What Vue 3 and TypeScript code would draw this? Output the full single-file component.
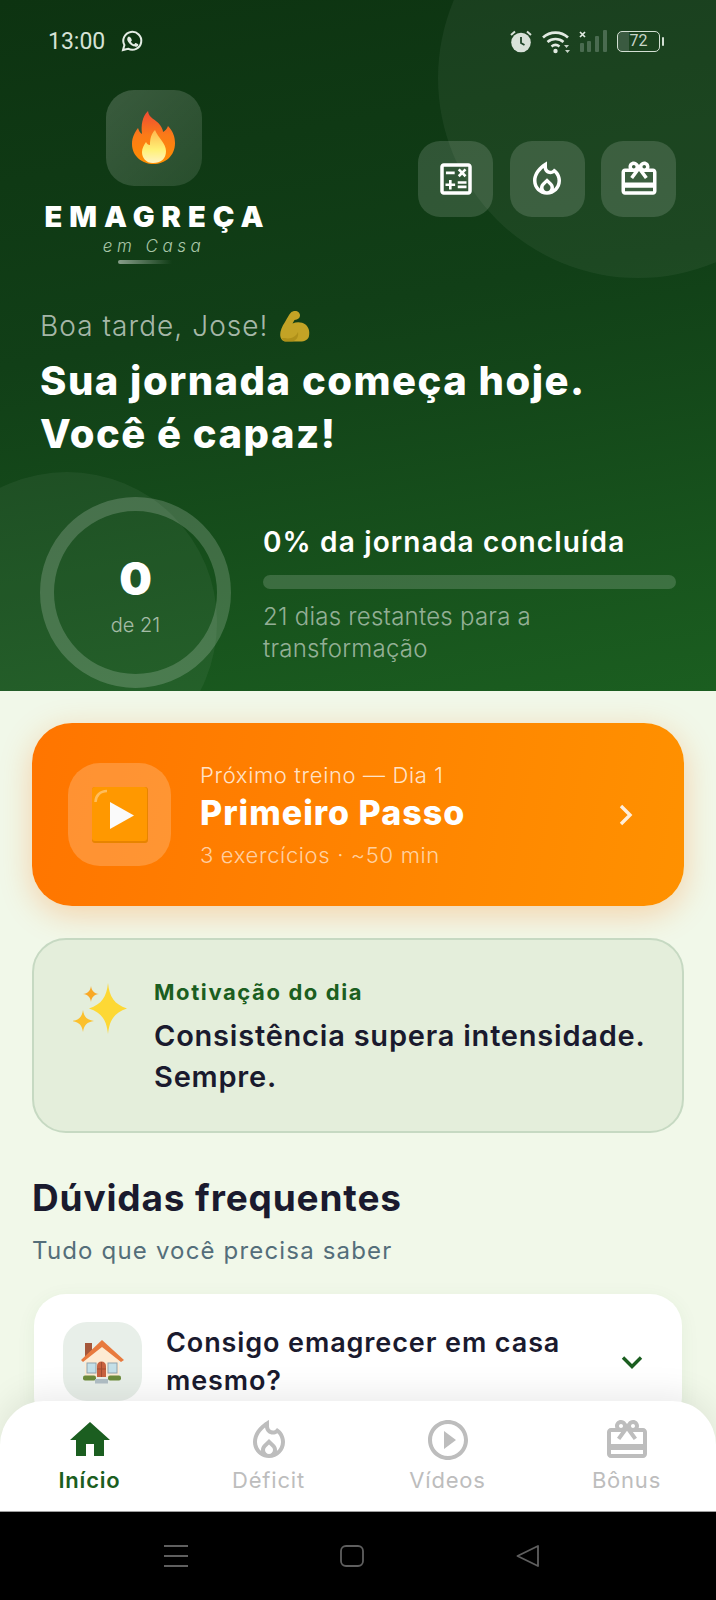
<script setup lang="ts">
interface NavItem {
  label: string;
  d: string;
  active?: boolean;
}

const icons = {
  calc: 'M19 3H5c-1.1 0-2 .9-2 2v14c0 1.1.9 2 2 2h14c1.1 0 2-.9 2-2V5c0-1.1-.9-2-2-2zm0 16H5V5h14v14zM6.25 7.72h5v1.5h-5zM13 15.75h5v1.5h-5zM13 13.25h5v1.5h-5zM8 18h1.5v-2h2v-1.5h-2v-2H8v2H6V16h2zM14.09 10.95l1.41-1.41 1.41 1.41 1.06-1.06-1.41-1.42 1.41-1.41L16.91 6 15.5 7.41 14.09 6l-1.06 1.06 1.41 1.41-1.41 1.42z',
  fire: 'M16 6l-.44.55c-.42.52-.98.75-1.54.75C13 7.3 12 6.52 12 5.3V2S4 6 4 13c0 4.42 3.58 8 8 8s8-3.58 8-8c0-2.96-1.61-5.62-4-7zm-4 13c-1.1 0-2-.9-2-2 0-.55.22-1.05.59-1.41L12 14.2l1.42 1.39c.36.36.58.86.58 1.41 0 1.1-.9 2-2 2zm3.96-1.5c.04-.36.22-1.89-1.13-3.22L12 11.5l-2.83 2.78C7.81 15.62 8 17.17 8.04 17.5 6.79 16.4 6 14.79 6 13c0-3.16 2.13-5.65 4.03-7.25.23 1.99 1.93 3.55 3.99 3.55.78 0 1.54-.23 2.18-.66C17.34 9.78 18 11.35 18 13c0 1.79-.79 3.4-2.04 4.5z',
  gift: 'M20 6h-2.18c.11-.31.18-.65.18-1 0-1.66-1.34-3-3-3-1.05 0-1.96.54-2.5 1.35l-.5.67-.5-.68C10.96 2.54 10.05 2 9 2 7.34 2 6 3.34 6 5c0 .35.07.69.18 1H4c-1.11 0-1.99.89-1.99 2L2 19c0 1.11.89 2 2 2h16c1.11 0 2-.89 2-2V8c0-1.11-.89-2-2-2zm-5-2c.55 0 1 .45 1 1s-.45 1-1 1-1-.45-1-1 .45-1 1-1zM9 4c.55 0 1 .45 1 1s-.45 1-1 1-1-.45-1-1 .45-1 1-1zm11 15H4v-2h16v2zm0-5H4V8h5.08L7 10.83 8.62 12 12 7.4l3.38 4.6L17 10.83 14.92 8H20v6z',
  home: 'M10 20v-6h4v6h5v-8h3L12 3 2 12h3v8z',
  play: 'M12 2C6.48 2 2 6.48 2 12s4.48 10 10 10 10-4.48 10-10S17.52 2 12 2zm0 18c-4.41 0-8-3.59-8-8s3.59-8 8-8 8 3.59 8 8-3.59 8-8 8zm-2-3.5 6-4.5-6-4.5v9z',
};

const actions: string[] = [icons.calc, icons.fire, icons.gift];

const nav: NavItem[] = [
  { label: 'Início', d: icons.home, active: true },
  { label: 'Déficit', d: icons.fire },
  { label: 'Vídeos', d: icons.play },
  { label: 'Bônus', d: icons.gift },
];
</script>

<template>
  <div class="screen">
    <header class="hero">
      <div class="blob blob-top"></div>
      <div class="blob blob-bottom"></div>

      <div class="status">
        <div class="status-left">
          <span class="clock">13:00</span>
          <svg class="wa" viewBox="0 0 24 24" fill="none" stroke="currentColor">
            <path stroke-width="2" d="M3 21l1.4-4.9A9 9 0 1 1 8 19.7L3 21z" />
            <path fill="currentColor" stroke="none" d="M9.2 7.4c-.3 0-.7.1-1 .5-.4.4-1 1-1 2.3s1 2.6 1.100 2.800c.1.200 1.900 3 4.700 4.100 2.300.9 2.800.7 3.300.7s1.600-.7 1.800-1.300c.2-.6.2-1.200.2-1.300-.1-.1-.3-.2-.5-.3l-1.900-.9c-.3-.1-.4-.1-.6.1l-.8 1c-.2.2-.3.2-.6.100-1.100-.5-2-1-2.800-2.300-.2-.3 0-.5.1-.6l.6-.9c.1-.2.1-.3 0-.5l-.9-2.100c-.2-.5-.5-.4-.7-.4z" />
          </svg>
        </div>
        <div class="status-right">
          <svg class="st-alarm" viewBox="0 0 22 24">
            <circle cx="11" cy="13.500" r="9.800" fill="#d9e2da" />
            <path d="M11 8v6l3.500 2" stroke="#20452a" stroke-width="1.800" fill="none" />
            <path d="M1 6 5 2.500M21 6 17 2.500" stroke="#d9e2da" stroke-width="2" />
          </svg>
          <svg class="st-wifi" viewBox="0 0 29 25" fill="none" stroke="#e2eae2" stroke-width="2.600">
            <path d="M1 8.500C8 2 19 2 26 8.500" />
            <path d="M5.500 13c4.500-4 11.500-4 16 0" />
            <path d="M9.500 17.500c2.500-2 5.500-2 8 0" />
            <circle cx="13.500" cy="22" r="2.200" fill="#e2eae2" stroke="none" />
            <path d="M22 16h5l-2.500 3z M23 21h5l-2.500 3z" fill="#c5d2c6" stroke="none" />
          </svg>
          <svg class="st-signal" viewBox="0 0 28 22">
            <path d="M1 2l5 5M6 2 1 7" stroke="#e2eae2" stroke-width="1.700" />
            <rect x="1" y="13" width="4" height="9" rx="1" fill="#4a6b50" />
            <rect x="8" y="11" width="4" height="11" rx="1" fill="#4a6b50" />
            <rect x="16" y="6" width="4" height="16" rx="1" fill="#4a6b50" />
            <rect x="24" y="0" width="4" height="22" rx="1" fill="#4a6b50" />
          </svg>
          <div class="battery">
            <div class="battery-body"><span>72</span></div>
            <div class="battery-tip"></div>
          </div>
        </div>
      </div>

      <div class="top-row">
        <div class="brand">
          <div class="logo-tile">
            <svg class="flame" viewBox="0 0 44 54">
              <defs>
                <linearGradient id="fo" x1="0" y1="0" x2="0" y2="1">
                  <stop offset="0" stop-color="#ef4a34" />
                  <stop offset="0.45" stop-color="#fb7a18" />
                  <stop offset="1" stop-color="#ff8f00" />
                </linearGradient>
                <linearGradient id="fi" x1="0" y1="0" x2="0" y2="1">
                  <stop offset="0" stop-color="#ffb74d" />
                  <stop offset="0.6" stop-color="#fff176" />
                  <stop offset="1" stop-color="#fff3c4" />
                </linearGradient>
              </defs>
              <path fill="url(#fo)" d="M16 0C17 8 24 8 28 14C30 17 31 19 31 21C33 20 35 18 36 15C41 20 43 26 43 32C43 45 33 53 21.500 53C10 53 0 45 0 33C0 26 3 21 6 17C7 20 8 22 10 23C9 14 10 6 16 0Z" />
              <path fill="url(#fi)" d="M23 19C26 27 34 32 34 40C34 48 29 52 21 52C14 52 10 47 10 41C10 37 12 34 14 31C15 33 16 34 18 34C18 28 19 23 23 19Z" />
            </svg>
          </div>
          <div class="brand-name">EMAGREÇA</div>
          <div class="brand-sub">em Casa</div>
          <div class="brand-line"></div>
        </div>
        <div class="actions">
          <button v-for="(d, i) in actions" :key="i" class="action" type="button">
            <svg viewBox="0 0 24 24" fill="#fff"><path :d="d" /></svg>
          </button>
        </div>
      </div>

      <p class="greet">
        <span>Boa tarde, Jose!</span>
        <svg class="muscle" viewBox="0 0 30 31">
          <path fill="#f5bf2a" d="M15 0C18 0 20 2 20 4.500C20 7 18 8.500 14.500 9L12.500 12.500C17 10.500 22 11 25.500 13.500C28.500 16 30 20 29 25C28.500 28.500 25 30.500 20 30.500H6C2.500 30.500 .5 28 .2 24C0 20 2 15.500 5 11C7 7.500 9 3.500 11 1.500C12 .5 13.500 0 15 0Z" />
          <path fill="#d09c14" d="M5 27C10 28.500 16 26 18 21C19 26 16 30 12 30.500H6C4 30.500 2.500 29 1.800 27Z" opacity="0.7" />
        </svg>
      </p>
      <h1 class="headline">Sua jornada começa hoje.<br />Você é capaz!</h1>

      <div class="progress">
        <div class="ring">
          <span class="ring-num">0</span>
          <span class="ring-of">de 21</span>
        </div>
        <div class="progress-info">
          <div class="progress-title">0% da jornada concluída</div>
          <div class="bar"></div>
          <div class="progress-note">21 dias restantes para a transformação</div>
        </div>
      </div>
    </header>

    <main class="content">
      <section class="next">
        <div class="next-tile">
          <svg class="play-emoji" viewBox="0 0 56 56">
            <rect width="56" height="56" rx="3" fill="#e88400" />
            <rect width="55" height="54" rx="3" fill="#ff9800" />
            <path d="M3.500 15C3.500 9 8 4 15 4" stroke="#ffbd5c" stroke-width="2.500" fill="none" />
            <path d="M18 15l24 13.500-24 13.500z" fill="#fafafa" />
          </svg>
        </div>
        <div class="next-text">
          <div class="next-over">Próximo treino — Dia 1</div>
          <div class="next-title">Primeiro Passo</div>
          <div class="next-meta">3 exercícios · ~50 min</div>
        </div>
        <svg class="next-arrow" viewBox="0 0 16 24" fill="none" stroke="#fff" stroke-width="3.400">
          <path d="M3 3l9 9-9 9" />
        </svg>
      </section>

      <section class="motivation">
        <svg class="sparkles" viewBox="0 0 54 54">
          <path fill="#fdd835" d="M35 0c1.500 14 6 21 19 25.500C41 30 36.500 37 35 51 33.500 37 29 30 16 25.500 29 21 33.500 14 35 0z" />
          <path fill="#f9a825" d="M18 3c.7 5 3 7.300 8 8-5 .7-7.300 3-8 8-.7-5-3-7.300-8-8 5-.7 7.300-3 8-8z" />
          <path fill="#fbc02d" d="M10 27c1 7 4 10 11 11-7 1-10 4-11 11-1-7-4-10-11-11 7-1 10-4 11-11z" />
        </svg>
        <div class="motivation-text">
          <div class="motivation-label">Motivação do dia</div>
          <div class="motivation-quote">Consistência supera intensidade. Sempre.</div>
        </div>
      </section>

      <h2 class="section-title">Dúvidas frequentes</h2>
      <p class="section-sub">Tudo que você precisa saber</p>

      <section class="faq">
        <div class="faq-tile">
          <svg class="house" viewBox="0 0 46 46">
            <rect x="5" y="4" width="7" height="14" fill="#a5573a" />
            <path d="M5 18 22 5l17 13v20H5z" fill="#fdebd3" />
            <path d="M22 1 44 21 41 23 22 8 3 23 1 21z" fill="#e87a3e" />
            <rect x="7" y="24" width="9" height="10" fill="#c4e0e8" stroke="#90a4ae" />
            <rect x="28" y="24" width="9" height="10" fill="#c4e0e8" stroke="#90a4ae" />
            <path d="M17 38V27c0-3 2-4.500 4.500-4.500S26 24 26 27v11z" fill="#c8623f" />
            <path d="M21.500 23v15M17 30h9" stroke="#a34d30" stroke-width="1" />
            <rect x="3" y="36.500" width="13" height="5" rx="2" fill="#6d8b3a" />
            <rect x="28" y="36.500" width="13" height="5" rx="2" fill="#6d8b3a" />
            <rect x="15" y="40" width="13" height="4.500" fill="#b0bec5" />
          </svg>
        </div>
        <div class="faq-question">Consigo emagrecer em casa mesmo?</div>
        <svg class="faq-chevron" viewBox="0 0 24 16" fill="none" stroke="#1b5e20" stroke-width="3.400">
          <path d="M3 3.500l9 9 9-9" />
        </svg>
      </section>
    </main>

    <nav class="tabs">
      <div v-for="item in nav" :key="item.label" class="tab" :class="{ on: item.active }">
        <svg viewBox="0 0 24 24" fill="currentColor"><path :d="item.d" /></svg>
        <span>{{ item.label }}</span>
      </div>
    </nav>

    <footer class="sysbar">
      <svg viewBox="0 0 24 22" class="sys-ico" fill="none" stroke="#5f5f5f" stroke-width="1.800">
        <path d="M0 1h24M0 11h24M0 21h24" />
      </svg>
      <svg viewBox="0 0 24 22" class="sys-ico" fill="none" stroke="#5f5f5f" stroke-width="1.800">
        <rect x="1" y="1" width="22" height="20" rx="5" />
      </svg>
      <svg viewBox="0 0 24 22" class="sys-ico" fill="none" stroke="#5f5f5f" stroke-width="1.800" stroke-linejoin="round">
        <path d="M1.500 11 22 1v20z" />
      </svg>
    </footer>
  </div>
</template>

<style>
html,
body {
  margin: 0;
  background: #000;
}
</style>

<style scoped>
* {
  box-sizing: border-box;
}

.screen {
  position: relative;
  width: 716px;
  height: 1600px;
  display: flex;
  flex-direction: column;
  overflow: hidden;
  background: #f1f8e9;
  font-family: Inter, "Noto Sans", sans-serif;
  color: #1a1a2e;
}

.hero {
  position: relative;
  height: 691px;
  flex: none;
  padding: 26px 40px 0;
  overflow: hidden;
  background: linear-gradient(170deg, #0d3311 0%, #113f17 45%, #1b5e20 100%);
  color: #fff;
}

.blob {
  position: absolute;
  border-radius: 50%;
  background: rgba(255, 255, 255, 0.05);
}

.blob-top {
  width: 400px;
  height: 400px;
  top: -122px;
  right: -122px;
}

.blob-bottom {
  width: 300px;
  height: 300px;
  left: -83px;
  bottom: -81px;
}

.status {
  position: relative;
  display: flex;
  justify-content: space-between;
  align-items: center;
  height: 30px;
  padding: 0 12px 0 8px;
}

.status-left,
.status-right {
  display: flex;
  align-items: center;
}

.clock {
  font-family: Roboto, sans-serif;
  font-size: 23px;
  color: #d6e2d6;
}

.wa {
  width: 24px;
  height: 24px;
  margin-left: 15px;
  color: #e4ece4;
}

.st-alarm {
  width: 22px;
  height: 24px;
}

.st-wifi {
  width: 29px;
  height: 25px;
  margin-left: 10px;
}

.st-signal {
  width: 28px;
  height: 22px;
  margin-left: 8px;
}

.battery {
  display: flex;
  align-items: center;
  margin-left: 10px;
}

.battery-body {
  width: 43px;
  height: 21px;
  border: 1.500px solid #d3dfd3;
  border-radius: 5px;
  font-family: Roboto, sans-serif;
  font-size: 16px;
  line-height: 18px;
  text-align: center;
  color: #c8d5c8;
  background: linear-gradient(90deg, #3a5a40 0 28%, transparent 28%);
}

.battery-tip {
  width: 2px;
  height: 9px;
  margin-left: 2px;
  border-radius: 1px;
  background: #d3dfd3;
}

.top-row {
  position: relative;
  display: flex;
  justify-content: space-between;
  align-items: flex-start;
  margin-top: 34px;
}

.brand {
  display: flex;
  flex-direction: column;
  align-items: center;
  width: 222px;
  margin-left: 3px;
}

.logo-tile {
  width: 96px;
  height: 96px;
  display: flex;
  align-items: center;
  justify-content: center;
  border-radius: 28px;
  background: linear-gradient(135deg, rgba(255, 255, 255, 0.18), rgba(255, 255, 255, 0.1));
}

.flame {
  width: 44px;
  height: 54px;
}

.brand-name {
  margin-top: 13px;
  font-size: 29px;
  line-height: 36px;
  font-weight: 900;
  letter-spacing: 7px;
  margin-right: -7px;
  white-space: nowrap;
}

.brand-sub {
  font-size: 17px;
  line-height: 20px;
  font-style: italic;
  font-weight: 300;
  letter-spacing: 4.500px;
  color: #a9c7a9;
  margin-top: 1px;
}

.brand-line {
  width: 72px;
  height: 4px;
  margin-top: 4px;
  border-radius: 2px;
  background: linear-gradient(90deg, rgba(255, 255, 255, 0.5), transparent 75%);
}

.actions {
  display: flex;
  gap: 16.500px;
  margin-top: 51px;
}

.action {
  width: 75px;
  height: 76px;
  display: flex;
  align-items: center;
  justify-content: center;
  padding: 0;
  border: 0;
  border-radius: 22px;
  background: rgba(255, 255, 255, 0.14);
}

.action svg {
  width: 42px;
  height: 42px;
}

.greet {
  position: relative;
  display: flex;
  align-items: center;
  gap: 11px;
  margin: 42px 0 0;
  height: 40px;
  font-size: 28px;
  font-weight: 350;
  letter-spacing: 1.050px;
  color: rgba(255, 255, 255, 0.65);
}

.muscle {
  width: 30px;
  height: 31px;
  opacity: 0.78;
}

.headline {
  position: relative;
  margin: 8px 0 0;
  font-size: 40px;
  line-height: 53px;
  font-weight: 800;
  letter-spacing: 1.500px;
}

.progress {
  position: relative;
  display: flex;
  align-items: center;
  gap: 32px;
  margin-top: 37px;
}

.ring {
  flex: none;
  width: 191px;
  height: 191px;
  display: flex;
  flex-direction: column;
  align-items: center;
  justify-content: center;
  padding-top: 4px;
  border: 14px solid rgba(255, 255, 255, 0.18);
  border-radius: 50%;
}

.ring-num {
  font-size: 46px;
  line-height: 52px;
  font-weight: 900;
}

.ring-of {
  margin-top: 8px;
  font-size: 20px;
  line-height: 26px;
  font-weight: 300;
  color: rgba(255, 255, 255, 0.6);
}

.progress-info {
  flex: 1;
  padding-top: 3px;
}

.progress-title {
  font-size: 28px;
  line-height: 36px;
  font-weight: 600;
  letter-spacing: 1.150px;
  white-space: nowrap;
}

.bar {
  height: 14px;
  margin-top: 15px;
  border-radius: 7px;
  background: rgba(255, 255, 255, 0.16);
}

.progress-note {
  margin-top: 12px;
  font-size: 24px;
  line-height: 32px;
  font-weight: 300;
  letter-spacing: 0.250px;
  color: rgba(255, 255, 255, 0.55);
}

.content {
  flex: 1;
  min-height: 0;
  overflow: hidden;
  padding: 32px 32px 0;
}

.next {
  display: flex;
  align-items: center;
  height: 183px;
  padding: 0 36px;
  border-radius: 40px;
  background: linear-gradient(100deg, #ff7500 0%, #ff9100 100%);
  box-shadow: 0 8px 32px rgba(255, 111, 0, 0.28);
  color: #fff;
}

.next-tile {
  flex: none;
  width: 103px;
  height: 103px;
  display: flex;
  align-items: center;
  justify-content: center;
  border-radius: 32px;
  background: rgba(255, 255, 255, 0.2);
}

.play-emoji {
  width: 56px;
  height: 56px;
}

.next-text {
  flex: 1;
  margin-left: 29px;
}

.next-over {
  font-size: 22px;
  line-height: 30px;
  font-weight: 300;
  letter-spacing: 0.650px;
  color: rgba(255, 255, 255, 0.8);
}

.next-title {
  font-size: 34px;
  line-height: 46px;
  font-weight: 800;
  letter-spacing: 1px;
}

.next-meta {
  margin-top: 4px;
  font-size: 22px;
  line-height: 30px;
  font-weight: 300;
  letter-spacing: 0.650px;
  color: rgba(255, 255, 255, 0.65);
}

.next-arrow {
  flex: none;
  width: 16px;
  height: 24px;
  margin-right: 14px;
  opacity: 0.85;
}

.motivation {
  display: flex;
  align-items: flex-start;
  height: 195px;
  margin-top: 32px;
  padding: 43px 30px 0 39px;
  border: 2px solid #c6d9c2;
  border-radius: 34px;
  background: #e4eedb;
}

.sparkles {
  flex: none;
  width: 54px;
  height: 54px;
}

.motivation-text {
  margin-left: 27px;
  margin-top: -6px;
}

.motivation-label {
  font-size: 22px;
  line-height: 30px;
  font-weight: 700;
  letter-spacing: 1.600px;
  color: #1b5e20;
}

.motivation-quote {
  margin-top: 8px;
  font-size: 29px;
  line-height: 41px;
  font-weight: 600;
  letter-spacing: 0.780px;
}

.section-title {
  margin: 40px 0 0;
  font-size: 37px;
  line-height: 50px;
  font-weight: 700;
  letter-spacing: 0.850px;
}

.section-sub {
  margin: 13px 0 0;
  font-size: 24px;
  line-height: 30px;
  letter-spacing: 1.170px;
  color: #546e7a;
}

.faq {
  display: flex;
  align-items: center;
  margin: 28px 2px 0;
  padding: 28px 38px 28px 29px;
  border-radius: 32px;
  background: #fff;
  box-shadow: 0 4px 20px rgba(27, 94, 32, 0.06);
}

.faq-tile {
  flex: none;
  width: 79px;
  height: 79px;
  display: flex;
  align-items: center;
  justify-content: center;
  border-radius: 24px;
  background: #e8efe9;
}

.house {
  width: 46px;
  height: 46px;
}

.faq-question {
  flex: 1;
  margin-left: 24px;
  font-size: 27px;
  line-height: 38px;
  font-weight: 600;
  letter-spacing: 0.900px;
}

.faq-chevron {
  flex: none;
  width: 24px;
  height: 16px;
  margin-left: 14px;
}

.tabs {
  position: absolute;
  left: 0;
  right: 0;
  bottom: 88px;
  height: 111px;
  display: grid;
  grid-template-columns: repeat(4, 1fr);
  padding-top: 15px;
  border-radius: 44px 44px 0 0;
  border-bottom: 1px solid #9e9e9e;
  background: #fff;
  box-shadow: 0 -8px 32px rgba(0, 0, 0, 0.08);
}

.tab {
  display: flex;
  flex-direction: column;
  align-items: center;
  color: #bdbdbd;
  font-size: 22px;
  line-height: 30px;
  font-weight: 400;
  letter-spacing: 0.800px;
}

.tab svg {
  width: 48px;
  height: 48px;
}

.tab span {
  margin-top: 1px;
}

.tab.on {
  color: #1b5e20;
  font-weight: 600;
}

.sysbar {
  flex: none;
  position: relative;
  height: 88px;
  display: flex;
  align-items: center;
  justify-content: center;
  gap: 152px;
  padding-right: 12px;
  background: #000;
}

.sys-ico {
  width: 24px;
  height: 22px;
}
</style>
